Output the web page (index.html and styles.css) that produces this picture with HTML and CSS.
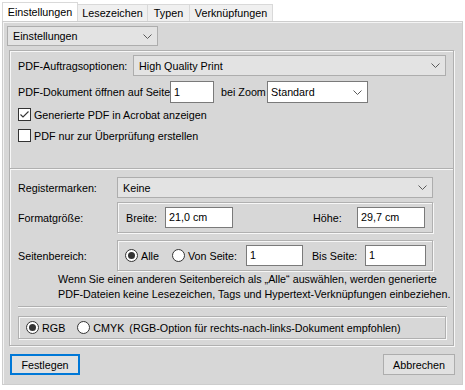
FILE: index.html
```html
<!DOCTYPE html>
<html lang="de">
<head>
    <meta charset="UTF-8">
    <meta name="viewport" content="width=device-width, initial-scale=1.0">
    <link rel="stylesheet" href="styles.css">
    <title>Acrobat PDFMaker</title>
</head>
<body>
    <div class="tabBar">
        <div class="tab tabActive tabSettings">Einstellungen</div>
        <div class="tab tabBookmarks">Lesezeichen</div>
        <div class="tab tabTypes">Typen</div>
        <div class="tab tabLinks">Verknüpfungen</div>
    </div>

    <div class="page">
        <div class="combo presetCombo">
            <span>Einstellungen</span>
            <svg class="chevron" width="9" height="5" viewBox="0 0 9 5"><polyline points="0.5,0.5 4.5,4.5 8.5,0.5"/></svg>
        </div>

        <div class="group">
            <div class="row jobRow">
                <span class="jobLabel">PDF-Auftragsoptionen:</span>
                <div class="combo jobCombo">
                    <span>High Quality Print</span>
                    <svg class="chevron" width="9" height="5" viewBox="0 0 9 5"><polyline points="0.5,0.5 4.5,4.5 8.5,0.5"/></svg>
                </div>
            </div>

            <div class="row openRow">
                <span class="openLabel">PDF-Dokument öffnen auf Seite</span>
                <div class="field pageField">1</div>
                <span class="zoomLabel">bei Zoom</span>
                <div class="dropdown zoomCombo">
                    <span>Standard</span>
                    <svg class="chevron" width="9" height="5" viewBox="0 0 9 5"><polyline points="0.5,0.5 4.5,4.5 8.5,0.5"/></svg>
                </div>
            </div>

            <div class="checkRow">
                <span class="checkbox">
                    <svg width="11" height="11" viewBox="0 0 11 11"><polyline points="1.5,5.5 4,8 9.5,2.5"/></svg>
                </span>
                <span>Generierte PDF in Acrobat anzeigen</span>
            </div>
            <div class="checkRow">
                <span class="checkbox"></span>
                <span>PDF nur zur Überprüfung erstellen</span>
            </div>

            <div class="separator wideSeparator"></div>

            <div class="formGrid">
                <span class="gridLabel">Registermarken:</span>
                <div class="combo marksCombo">
                    <span>Keine</span>
                    <svg class="chevron" width="9" height="5" viewBox="0 0 9 5"><polyline points="0.5,0.5 4.5,4.5 8.5,0.5"/></svg>
                </div>

                <span class="gridLabel sizeLabel">Formatgröße:</span>
                <div class="box sizeBox">
                    <span class="widthLabel">Breite:</span>
                    <div class="field sizeField">21,0 cm</div>
                    <span class="heightLabel">Höhe:</span>
                    <div class="field sizeField">29,7 cm</div>
                </div>

                <span class="gridLabel rangeLabel">Seitenbereich:</span>
                <div class="box rangeBox">
                    <span class="radio checked"></span>
                    <span class="radioText">Alle</span>
                    <span class="radio fromRadio"></span>
                    <span class="radioText fromText">Von Seite:</span>
                    <div class="field fromField">1</div>
                    <span class="toLabel">Bis Seite:</span>
                    <div class="field toField">1</div>
                </div>
            </div>

            <p class="note">Wenn Sie einen anderen Seitenbereich als „Alle“ auswählen, werden generierte<br>PDF-Dateien keine Lesezeichen, Tags und Hypertext-Verknüpfungen einbeziehen.</p>

            <div class="separator"></div>

            <div class="box colorBox">
                <span class="radio checked"></span>
                <span class="radioText">RGB</span>
                <span class="radio cmykRadio"></span>
                <span class="radioText">CMYK</span>
                <span class="colorHint">(RGB-Option für rechts-nach-links-Dokument empfohlen)</span>
            </div>
        </div>

        <div class="buttonRow">
            <button class="button defaultButton">Festlegen</button>
            <button class="button cancelButton">Abbrechen</button>
        </div>
    </div>
</body>
</html>
```

FILE: styles.css
```css
body {
    margin: 0;
    padding: 0;
    background-color: #ffffff;
    font-family: "Liberation Sans", Arial, sans-serif;
    font-size: 10.75px;
    color: #000000;
    width: 465px;
    height: 390px;
    overflow: hidden;
}

/* tab strip */
.tabBar {
    display: flex;
    align-items: flex-end;
    height: 21px;
    padding-left: 2px;
}

.tab {
    box-sizing: border-box;
    height: 17px;
    line-height: 16px;
    background-color: #f0f0f0;
    border: 1px solid #d9d9d9;
    border-bottom: none;
    border-left: none;
    text-align: center;
}

.tabActive {
    height: 19px;
    line-height: 18px;
    background-color: #ffffff;
    border-left: 1px solid #d9d9d9;
}

.tabSettings { width: 76px; }
.tabBookmarks { width: 70px; }
.tabTypes { width: 42px; }
.tabLinks { width: 83px; }

/* tab page */
.page {
    box-sizing: border-box;
    margin-left: 2px;
    width: 461px;
    height: 364px;
    padding: 4px 4px 0 4px;
    background-color: #d7d7d7;
    border: 1px solid #cdcdcd;
    box-shadow: inset 1px 1px 0 #f4f4f4;
}

.combo,
.dropdown {
    box-sizing: border-box;
    display: flex;
    align-items: center;
    justify-content: space-between;
    padding: 0 5px 0 5px;
    background-color: #e3e3e3;
    border: 1px solid #adadad;
}

.dropdown {
    background-color: #ffffff;
    border-color: #7a7a7a;
    padding-left: 3px;
}

.chevron polyline {
    fill: none;
    stroke: #5a5a5a;
    stroke-width: 1;
}

.presetCombo {
    width: 151px;
    height: 20px;
}

.group {
    box-sizing: border-box;
    margin: 4px 0 0 2px;
    width: 445px;
    height: 296px;
    padding: 0 6px 0 8px;
    border: 1px solid #b0b0b0;
    box-shadow: inset 1px 1px 0 #f7f7f7, 1px 1px 0 #f7f7f7;
}

.row {
    display: flex;
    align-items: center;
}

.jobRow {
    margin-top: 4px;
}

.jobLabel {
    width: 115px;
}

.jobCombo {
    width: 313px;
    height: 21px;
}

.openRow {
    margin-top: 5px;
}

.openLabel {
    width: 152px;
    white-space: nowrap;
}

.field {
    box-sizing: border-box;
    height: 21px;
    line-height: 19px;
    padding-left: 3px;
    background-color: #ffffff;
    border: 1px solid #7a7a7a;
}

.pageField {
    width: 44px;
    height: 22px;
    line-height: 20px;
}

.zoomLabel {
    width: 46px;
    margin-left: 7px;
}

.zoomCombo {
    width: 101px;
    height: 22px;
}

.checkRow {
    display: flex;
    align-items: center;
    height: 19px;
    margin-top: 2px;
}

.checkbox {
    box-sizing: border-box;
    display: flex;
    align-items: center;
    justify-content: center;
    width: 13px;
    height: 13px;
    margin-right: 3px;
    background-color: #ffffff;
    border: 1px solid #333333;
}

.checkbox polyline {
    fill: none;
    stroke: #333333;
    stroke-width: 1.1;
}

.separator {
    height: 1px;
    margin-top: 4px;
    background-color: #b0b0b0;
    border-bottom: 1px solid #f7f7f7;
}

.wideSeparator {
    margin: 23px -6px 0 -8px;
}

.formGrid {
    display: grid;
    grid-template-columns: 99px 316px;
    row-gap: 4px;
    align-items: center;
    margin-top: 7px;
}

.marksCombo {
    height: 21px;
}

.box {
    box-sizing: border-box;
    display: flex;
    align-items: center;
    border: 1px solid #b0b0b0;
    box-shadow: inset 1px 1px 0 #f7f7f7, 1px 1px 0 #f7f7f7;
}

.sizeBox,
.rangeBox {
    height: 31px;
    padding-left: 8px;
}

.rangeBox {
    margin-top: 3px;
    padding-left: 7px;
}

.rangeLabel {
    margin-top: 3px;
}

.widthLabel {
    width: 39px;
}

.sizeField {
    width: 68px;
}

.heightLabel {
    width: 44px;
    margin-left: 80px;
}

.radio {
    box-sizing: border-box;
    display: flex;
    align-items: center;
    justify-content: center;
    width: 13px;
    height: 13px;
    border-radius: 50%;
    background-color: #ffffff;
    border: 1px solid #333333;
}

.radio.checked::after {
    content: "";
    width: 7px;
    height: 7px;
    border-radius: 50%;
    background-color: #333333;
}

.radioText {
    margin-left: 3px;
}

.fromRadio {
    margin-left: 13px;
}

.fromText {
    width: 58px;
}

.fromField {
    width: 57px;
}

.toLabel {
    width: 53px;
    margin-left: 9px;
}

.toField {
    width: 61px;
}

.note {
    margin: 1px 0 0 40px;
    line-height: 15px;
    white-space: nowrap;
}

.colorBox {
    height: 23px;
    width: 428px;
    margin-top: 8px;
    padding-left: 7px;
}

.cmykRadio {
    margin-left: 12px;
}

.colorHint {
    margin-left: 5px;
}

.buttonRow {
    display: flex;
    justify-content: space-between;
    margin: 8px 3px 0 3px;
}

.button {
    box-sizing: border-box;
    height: 21px;
    padding: 0;
    font-family: inherit;
    font-size: 10.75px;
    color: #000000;
    background-color: #e1e1e1;
    border: 1px solid #adadad;
}

.defaultButton {
    width: 70px;
    border: 2px solid #0078d7;
}

.cancelButton {
    width: 72px;
}
```
